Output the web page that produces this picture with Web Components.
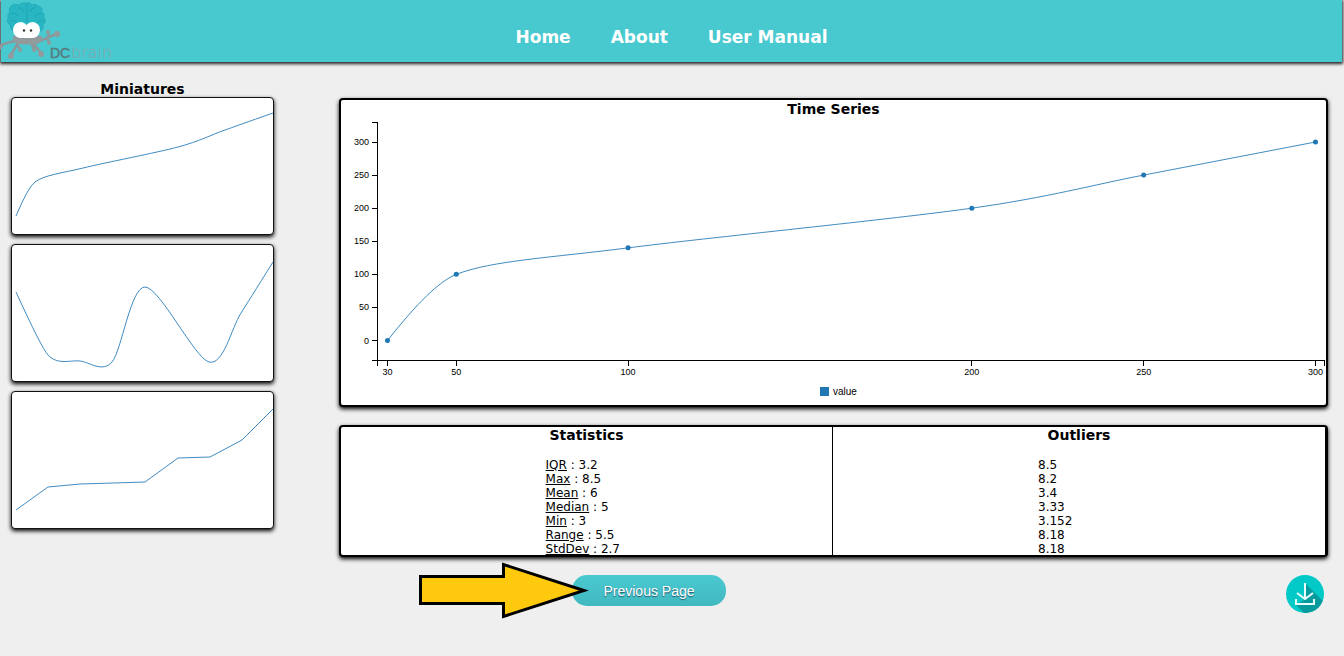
<!DOCTYPE html>
<html lang="en">
<head>
<meta charset="utf-8">
<title>DCbrain</title>
<style>
  body { margin: 0; min-height: 100vh; background: #efefef; color: #000; font-family: "DejaVu Sans", Verdana, sans-serif; font-size: 12px; line-height: 14px; }
</style>
</head>
<body>
<dc-page></dc-page>

<template id="t-page">
  <style>
    :host { display: block; }
    main { display: flex; gap: 65px; padding: 20px 16px 24px 11px; align-items: flex-start; }
    aside { flex: 0 0 263px; display: flex; flex-direction: column; gap: 9px; min-width: 0; }
    aside h2 { margin: 0 0 -9px; font-size: 14px; line-height: 15px; text-align: center; }
    .results { flex: 1; min-width: 0; padding-top: 16px; display: flex; flex-direction: column; gap: 18px; }
    .pair { display: grid; grid-template-columns: 1fr 1fr; border-right: 1px solid #000; }
    .pair > :first-child { border-right: 1px solid #000; }
  </style>
  <dc-header></dc-header>
  <main>
    <aside>
      <h2>Miniatures</h2>
      <dc-mini kind="spline" points="4,118 23,84 71,70 166,49 213,32 261,15"></dc-mini>
      <dc-mini kind="spline" points="4,47 36,110 68,116 100,117 133,42 197,117 229,68 261,17"></dc-mini>
      <dc-mini kind="line" points="4,118 36,95 68,92 101,91 133,90 166,66 198,65 230,48 261,17"></dc-mini>
    </aside>
    <div class="results">
      <dc-panel heading="Time Series"><dc-chart></dc-chart></dc-panel>
      <dc-panel>
        <div class="pair">
          <dc-list heading="Statistics" items="IQR:3.2|Max:8.5|Mean:6|Median:5|Min:3|Range:5.5|StdDev:2.7"></dc-list>
          <dc-list heading="Outliers" items="8.5|8.2|3.4|3.33|3.152|8.18|8.18"></dc-list>
        </div>
      </dc-panel>
      <dc-actions></dc-actions>
    </div>
  </main>
</template>

<template id="t-header">
  <style>
    :host { display: block; }
    header { position: relative; display: flex; align-items: center; justify-content: center; height: 62px; margin: 0 2px 0 1px; background: #48c9d0; box-shadow: 0 1px 3px 1px #222; }
    .logo { position: absolute; left: -1px; top: 0; line-height: 0; }
    nav { display: flex; gap: 40px; padding-top: 12px; }
    nav a { color: #fff; font-size: 17px; line-height: 20px; font-weight: bold; text-decoration: none; }
  </style>
  <header>
    <a class="logo" href="#" aria-label="DCbrain">
      <svg width="114" height="62" viewBox="0 0 114 62">
        <g stroke="#8d9698" stroke-width="2.5" fill="none" stroke-linecap="round">
          <path d="M16 41Q7 42 0 46M18 43L11 55M17 45l3 4M33 43l8 10M31 43l3 6M40 41L56 34M49 37l-1-4M47 38l2 4"/>
        </g>
        <g fill="#929a9c"><circle cx="11" cy="56" r="3"/><circle cx="20" cy="50" r="2"/><circle cx="41" cy="54" r="3"/><circle cx="34" cy="50" r="2"/><circle cx="57" cy="34" r="3"/><circle cx="48" cy="32" r="2"/><circle cx="49" cy="43" r="2"/><circle cx="1" cy="47" r="2"/></g>
        <path d="M13 36h29v4q-2 4-9 4.500H21q-7-.5-8-5.500z" fill="#929a9c"/>
        <path d="M27 3q-6-1-8 2q-5-2-8 1q-3 3-1 6q-3 2-2 6q-2 4 2 7q0 5 4 7l1 4h23l1-4q5-2 4-7q4-4 1-7q1-5-2-6q1-5-4-6q-3-3-6-1q-2-3-5-2z" fill="#27b6c2" stroke="#1fa6b3" stroke-width=".7"/>
        <path d="M27 4v18M18 8q5-1 5 4M11 14q5-2 7 2M10 20q6 0 8 4M36 7q-5 1-5 5M42 14q-6-1-7 3M44 21q-6-1-8 3" fill="none" stroke="#1aa2af" stroke-width=".8"/>
        <path d="M20 22q4 0 6.500 3q2.500-3 6.500-3q7 1 7 8.500q-1 7-7 7.500H20q-6-.5-7-7.500q0-7.500 7-8.500z" fill="#fff"/>
        <g fill="#333"><circle cx="24" cy="30.500" r="1.200"/><circle cx="31" cy="30.500" r="1.200"/></g>
        <text x="50" y="58" font-size="14" font-family="Liberation Sans, Arial, sans-serif" fill="#587b7f" stroke="#587b7f" stroke-width=".5">DC</text>
        <text x="71" y="58" font-size="16" font-family="DejaVu Sans, sans-serif" font-weight="200" fill="#8ba2a6">brain</text>
      </svg>
    </a>
    <nav><a href="#home">Home</a><a href="#about">About</a><a href="#manual">User Manual</a></nav>
  </header>
</template>

<template id="t-mini">
  <style>
    :host { display: block; border: 1px solid #111; border-radius: 4px; background: #fff; box-shadow: 0 2px 4px #000; }
    svg { display: block; width: 100%; height: auto; overflow: visible; }
    path { fill: none; stroke: #1f77b4; stroke-width: 1; opacity: .85; }
  </style>
  <svg viewBox="0 0 261 136" role="img" aria-label="Miniature chart"><path/></svg>
</template>

<template id="t-panel">
  <style>
    :host { display: block; border: 2px solid #000; border-radius: 4px; background: #fff; box-shadow: 0 2px 4px #000; }
    h2 { margin: 0; font-size: 14px; line-height: 18px; text-align: center; }
    h2:empty { display: none; }
  </style>
  <h2></h2><slot></slot>
</template>

<template id="t-list">
  <style>
    :host { display: block; min-width: 0; }
    h2 { margin: 0 0 15px; font-size: 14px; line-height: 16px; text-align: center; }
    .cols { display: grid; grid-template-columns: 5fr 7fr; margin-bottom: -1px; }
    ul { grid-column: 2; margin: 0; padding: 0; list-style: none; }
  </style>
  <h2></h2><div class="cols"><ul></ul></div>
</template>

<template id="t-chart">
  <style>
    :host { display: block; }
    svg { display: block; width: 100%; height: auto; font-family: "Liberation Sans", Arial, sans-serif; font-size: 9px; }
    .axis { fill: none; stroke: #000; shape-rendering: crispEdges; }
    .curve { fill: none; stroke: #1f77b4; opacity: .85; }
    .mark { fill: #1f77b4; }
    .key { font-size: 10px; }
  </style>
  <svg viewBox="0 0 985 287" role="img" aria-label="Time series of value"></svg>
</template>

<template id="t-actions">
  <style>
    :host { display: flex; justify-content: space-between; align-items: flex-start; padding: 0 4px 0 233px; }
    .prev { position: relative; }
    .prev button { display: block; width: 154px; height: 31px; padding: 0; border: 0; border-radius: 15px; background: linear-gradient(#4ac9d1, #41b8c0); color: #fff; font: 14px/16px "Liberation Sans", Arial, sans-serif; text-shadow: 0 1px 1px #23566e; }
    .arrow { position: absolute; left: -154px; top: -14px; pointer-events: none; }
    .download { display: block; width: 38px; height: 38px; padding: 0; border: 0; background: none; }
    svg { display: block; }
  </style>
  <div class="prev">
    <button type="button">Previous Page</button>
    <svg class="arrow" width="172" height="60" viewBox="0 0 172 60"><path d="M2.500 15.500H85.500V3.500L166 29.500L85.500 55.500V42.500H2.500z" fill="#ffc90e" stroke="#000" stroke-width="3"/></svg>
  </div>
  <button class="download" type="button" aria-label="Download">
    <svg width="38" height="38" viewBox="0 0 38 38">
      <defs><clipPath id="c"><circle cx="19" cy="19" r="19"/></clipPath></defs>
      <circle cx="19" cy="19" r="19" fill="#00c9c8"/>
      <path clip-path="url(#c)" d="M20 9L38 27V38H18L10 30L18 25L12 19L19 22z" fill="#079b9e"/>
      <path d="M19 8v16M11 18l8 6l8-6M10 24v5h18v-5" fill="none" stroke="#e8ffff" stroke-width="2"/>
    </svg>
  </button>
</template>

<script>
  // Cardinal spline with tension 0.7 through a list of [x, y] points.
  function spline(p) {
    const n = p.length, t = p.map((_, i) =>
      i && i < n - 1 ? [0.15 * (p[i + 1][0] - p[i - 1][0]), 0.15 * (p[i + 1][1] - p[i - 1][1])] : null);
    let d = `M${p[0]}Q${p[1][0] - t[1][0] * 2 / 3},${p[1][1] - t[1][1] * 2 / 3} ${p[1]}`;
    for (let i = 2; i < n - 1; i++)
      d += `C${p[i - 1][0] + t[i - 1][0]},${p[i - 1][1] + t[i - 1][1]} ${p[i][0] - t[i][0]},${p[i][1] - t[i][1]} ${p[i]}`;
    const a = p[n - 2], b = t[n - 2];
    return d + `Q${a[0] + b[0] * 2 / 3},${a[1] + b[1] * 2 / 3} ${p[n - 1]}`;
  }
  class Base extends HTMLElement {
    constructor() {
      super();
      this.attachShadow({ mode: "open" }).append(document.getElementById(this.constructor.tpl).content.cloneNode(true));
    }
    $(s) { return this.shadowRoot.querySelector(s); }
  }
  class DcHeader extends Base { static tpl = "t-header"; }
  class DcActions extends Base { static tpl = "t-actions"; }
  class DcPage extends Base { static tpl = "t-page"; }
  class DcPanel extends Base {
    static tpl = "t-panel";
    connectedCallback() { this.$("h2").textContent = this.getAttribute("heading") || ""; }
  }
  class DcMini extends Base {
    static tpl = "t-mini";
    connectedCallback() {
      const p = this.getAttribute("points").split(" ").map(s => s.split(",").map(Number));
      this.$("path").setAttribute("d", this.getAttribute("kind") === "spline" ? spline(p) : "M" + p.join("L"));
    }
  }
  class DcList extends Base {
    static tpl = "t-list";
    connectedCallback() {
      this.$("h2").textContent = this.getAttribute("heading");
      this.$("ul").innerHTML = this.getAttribute("items").split("|").map(s => {
        const [k, v] = s.split(":");
        return v ? `<li><u>${k}</u> : ${v}</li>` : `<li>${k}</li>`;
      }).join("");
    }
  }
  class DcChart extends Base {
    static tpl = "t-chart";
    connectedCallback() {
      const data = [[30, 0], [50, 100], [100, 140], [200, 200], [250, 250], [300, 300]];
      const x = v => 46.5 + (v - 30) * 928 / 270, y = v => 222.5 - v * 198.5 / 300;
      const pts = data.map(([a, b]) => [x(a), y(b)]);
      let s = `<path class="axis" d="M31 4.5H36.5V242.5H31M36.500 248V242.500H983.500V248"/>`;
      for (let v = 0; v <= 300; v += 50)
        s += `<path class="axis" d="M31 ${y(v)}H36.500"/><text x="28" y="${Math.round(y(v)) + 3}" text-anchor="end">${v}</text>`;
      for (const [v] of data)
        s += `<path class="axis" d="M${x(v)} 242.500V248"/><text x="${x(v)}" y="257" text-anchor="middle">${v}</text>`;
      s += `<path class="curve" d="${spline(pts)}"/>`;
      for (const [a, b] of pts) s += `<circle class="mark" cx="${a}" cy="${b}" r="2.500"/>`;
      s += `<rect class="mark" x="479" y="269" width="9" height="9"/><text class="key" x="492" y="277">value</text>`;
      this.$("svg").innerHTML = s;
    }
  }
  customElements.define("dc-header", DcHeader);
  customElements.define("dc-mini", DcMini);
  customElements.define("dc-panel", DcPanel);
  customElements.define("dc-list", DcList);
  customElements.define("dc-chart", DcChart);
  customElements.define("dc-actions", DcActions);
  customElements.define("dc-page", DcPage);
</script>
</body>
</html>
